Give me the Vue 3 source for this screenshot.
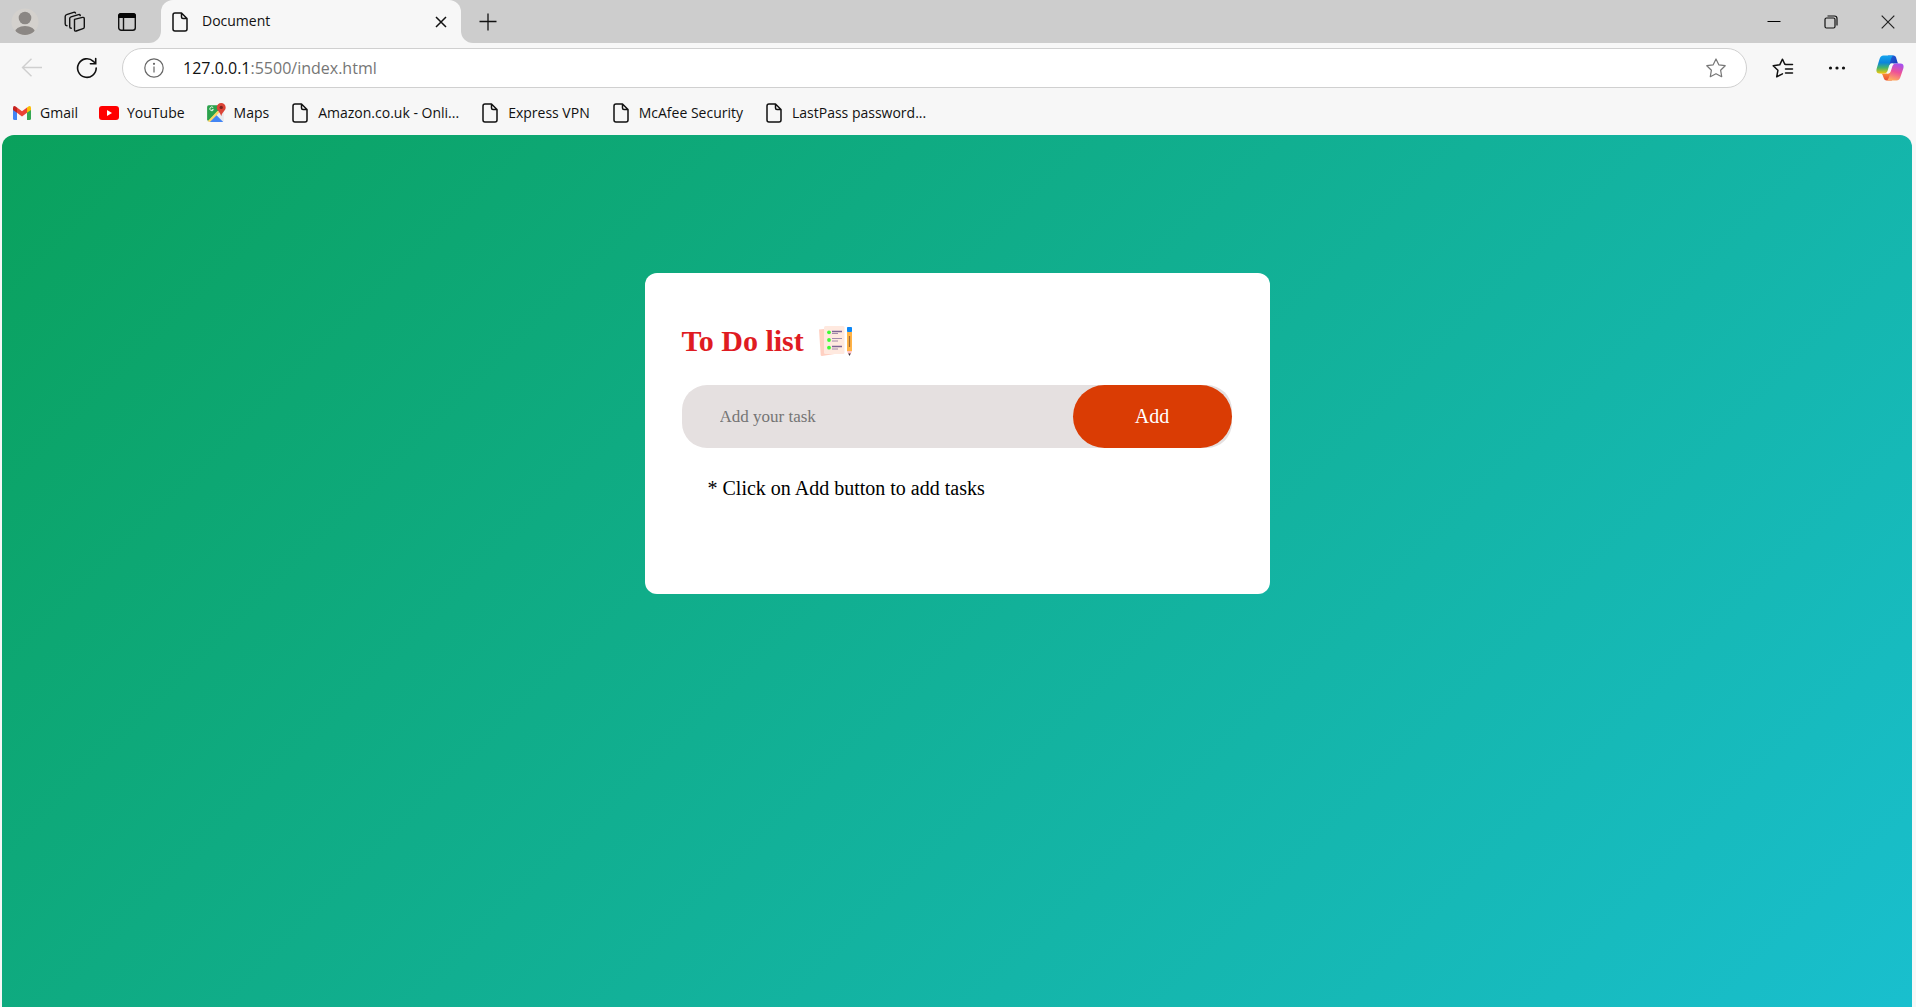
<script setup>
import { ref } from 'vue'

const task = ref('')
const address = ref('')
const bookmarks = [
  { label: 'Gmail', icon: 'gmail' },
  { label: 'YouTube', icon: 'youtube' },
  { label: 'Maps', icon: 'maps' },
  { label: 'Amazon.co.uk - Onli...', icon: 'page' },
  { label: 'Express VPN', icon: 'page' },
  { label: 'McAfee Security', icon: 'page' },
  { label: 'LastPass password...', icon: 'page' },
]
</script>

<template>
  <div class="browser">
    <header class="tab-strip">
      <div class="strip-left">
        <button class="icon-btn" aria-label="Profile">
          <svg width="28" height="28" viewBox="0 0 28 28">
            <defs><clipPath id="face"><circle cx="14" cy="14" r="13" /></clipPath></defs>
            <circle cx="14" cy="14" r="13.5" fill="#d4d1cd" />
            <g clip-path="url(#face)" fill="#8b8784">
              <circle cx="14" cy="10" r="6.3" />
              <ellipse cx="14" cy="25" rx="10.5" ry="7" />
            </g>
          </svg>
        </button>
        <button class="icon-btn" aria-label="Workspaces">
          <svg width="22" height="22" viewBox="0 0 22 22" fill="none" stroke="#111" stroke-width="1.4" stroke-linejoin="round" stroke-linecap="round">
            <path d="M10.500 8.400 18.500 6.400q1.800-.3 1.800 1.300v8.300q0 1.300-1.300 1.700l-6.800 2.300q-1.700.4-1.700-1.300v-8.600q0-1.400 0-1.700Z" />
            <path d="M7.300 17.300q-1.600 0-1.600-1.500V7.600q0-1.400 1.300-1.800l7.500-2.200q1.400-.3 1.800.9" />
            <path d="M3 14.800q-1.800-.1-1.800-1.700V5.500q0-1.500 1.400-1.900L9.600 1.300q1.400-.4 1.900.7" />
          </svg>
        </button>
        <button class="icon-btn" aria-label="Tab actions">
          <svg width="20" height="20" viewBox="0 0 20 20">
            <rect x="1.700" y="1.700" width="16.600" height="16.600" rx="2.500" fill="none" stroke="#111" stroke-width="1.400" />
            <path d="M1 6V4Q1 1 4 1h12q3 0 3 3v2Z" fill="#050505" />
            <path d="M6.500 6v12" stroke="#111" stroke-width="1.400" />
          </svg>
        </button>
      </div>
      <div class="tab-well">
        <div class="tab">
          <svg class="page-icon" width="16" height="20" viewBox="0 0 16 20"><path d="M3 1h6.500L15 6.500V17q0 2-2 2H3q-2 0-2-2V3q0-2 2-2ZM9.500 1v4q0 1.500 1.500 1.500h4" /></svg>
          <span class="tab-title">Document</span>
          <button class="icon-btn" aria-label="Close tab">
            <svg width="12" height="12" viewBox="0 0 12 12" stroke="#111" stroke-width="1.500"><path d="m1 1 10 10M11 1 1 11" /></svg>
          </button>
        </div>
      </div>
      <div class="strip-right">
        <button class="icon-btn" aria-label="New tab">
          <svg width="18" height="18" viewBox="0 0 18 18" stroke="#111" stroke-width="1.300"><path d="M9 .5v17M.5 8.500h17" /></svg>
        </button>
        <div class="window-buttons">
          <button class="icon-btn" aria-label="Minimise">
            <svg width="14" height="14" viewBox="0 0 14 14"><path d="M.5 6.500h13" stroke="#000" /></svg>
          </button>
          <button class="icon-btn" aria-label="Restore">
            <svg width="14" height="14" viewBox="0 0 14 14" fill="none" stroke="#111" stroke-width="1.200"><rect x="1" y="3" width="10" height="10" rx="1.500" /><path d="M3.500 1H10.500q2.500 0 2.500 2.500V10.500" /></svg>
          </button>
          <button class="icon-btn" aria-label="Close window">
            <svg width="14" height="14" viewBox="0 0 14 14" stroke="#222" stroke-width="1.200"><path d="m.7.7 12.600 12.600M13.300.7.7 13.300" /></svg>
          </button>
        </div>
      </div>
    </header>

    <div class="toolbar">
      <button class="icon-btn back" aria-label="Back" disabled>
        <svg width="22" height="20" viewBox="0 0 22 20" fill="none" stroke="#cfcfcf" stroke-width="1.400"><path d="M21 9.500H1.500M10.500.7 1.500 9.500l9 8.800" /></svg>
      </button>
      <button class="icon-btn" aria-label="Refresh">
        <svg width="22" height="22" viewBox="0 0 22 22" fill="none" stroke="#111" stroke-width="1.600" stroke-linecap="round"><path d="M20.200 11a9.300 9.300 0 1 1-2.900-6.700L19.500 6.500M19.700 1.500v5.300h-5.300" /></svg>
      </button>
      <div class="address">
        <svg width="20" height="20" viewBox="0 0 20 20" fill="none" stroke="#666" stroke-width="1.200"><circle cx="10" cy="10" r="9.200" /><path d="M10 8.500V14.500" /><circle cx="10" cy="5.800" r=".5" fill="#666" /></svg>
        <label class="url" for="address"><span class="host">127.0.0.1</span>:5500/index.html</label>
        <input id="address" v-model="address" class="address-input" type="text">
        <button class="icon-btn" aria-label="Add to favourites">
          <svg width="20" height="20" viewBox="0 0 20 20" fill="none" stroke="#777" stroke-width="1.200" stroke-linejoin="round"><path d="m10 1 2.800 5.800 6.400.9-4.600 4.500 1.100 6.500-5.700-3-5.700 3 1.100-6.500L.8 7.700l6.400-.9Z" /></svg>
        </button>
      </div>
      <div class="tools">
        <button class="icon-btn" aria-label="Favourites">
          <svg width="26" height="20" viewBox="0 0 26 20" fill="none" stroke="#111" stroke-width="1.500" stroke-linejoin="round" stroke-linecap="round"><path d="M13.500 6.300 12.800 6.200 10.500 1.200 7.700 6.800l-6.500 1 4.700 4.500-1.200 6.500 5.800-3M13.500 6.500h7M13.500 11h7M13.500 15h7" /></svg>
        </button>
        <button class="icon-btn" aria-label="Settings and more">
          <svg width="18" height="4" viewBox="0 0 18 4" fill="#111"><circle cx="2.500" cy="2" r="1.600" /><circle cx="9" cy="2" r="1.600" /><circle cx="15.500" cy="2" r="1.600" /></svg>
        </button>
        <button class="icon-btn" aria-label="Copilot">
          <svg width="28" height="26" viewBox="0 0 28 26">
            <defs>
              <linearGradient id="cp-left" x1="0" y1="0" x2="0" y2="1"><stop offset="0" stop-color="#16a5ee" /><stop offset=".4" stop-color="#0b85dc" /><stop offset=".68" stop-color="#46b46c" /><stop offset="1" stop-color="#f4c808" /></linearGradient>
              <linearGradient id="cp-right" x1="0.700" y1="0" x2="0.400" y2="1"><stop offset="0" stop-color="#a450f0" /><stop offset=".5" stop-color="#ee5297" /><stop offset="1" stop-color="#ffad5e" /></linearGradient>
              <linearGradient id="cp-top" x1="0" y1="0" x2="1" y2="1"><stop offset="0" stop-color="#2367dc" /><stop offset="1" stop-color="#1632b4" /></linearGradient>
              <linearGradient id="cp-bottom" x1="0" y1="0" x2="0" y2="1"><stop offset="0" stop-color="#ff9b38" /><stop offset="1" stop-color="#e94b35" /></linearGradient>
            </defs>
            <path d="M12 .5h5.500q2 0 2.600 2l1.300 4.500q.4 1.500 1.600 1.500h-7q-2 0-2.600 2Z" fill="url(#cp-top)" />
            <path d="M16 25.500h-5.500q-2 0-2.600-2L6.600 20q-.4-1.500-1.600-1.500h7q2 0 2.600-2Z" fill="url(#cp-bottom)" />
            <path d="M7.500.5H18q-2 0-2.900 3L11.700 15.500q-.9 3-3.700 3H3.500q-4 0-2.800-5L3.400 4.500Q4.400.5 7.500.5Z" fill="url(#cp-left)" />
            <path d="M20.500 25.500H10q2 0 2.900-3l3.400-11q.9-3 3.700-3h4.500q4 0 2.800 5l-2.700 8q-1 4-4.100 4Z" fill="url(#cp-right)" />
            <path d="M14.500 8.500h2.800q-1.200.7-1.700 2.500l-1.800 6q-.4 1.500-2 1.500H10.700q1.200-.7 1.600-2.500l1.200-5Z" fill="#f7f7f7" />
          </svg>
        </button>
      </div>
    </div>

    <nav class="bookmarks" aria-label="Bookmarks">
      <a v-for="item in bookmarks" :key="item.label" href="#" class="bookmark">
        <span class="bookmark-icon">
          <svg v-if="item.icon === 'gmail'" width="18" height="14" viewBox="0 0 18 14">
            <path d="M0 2v10.500Q0 14 1.500 14H4V5Z" fill="#4285f4" />
            <path d="M18 2v10.500q0 1.500-1.500 1.500H14V5Z" fill="#34a853" />
            <path d="M4 1.500v5.300L9 10.500l5-3.700V1.500L9 5.200Z" fill="#ea4335" />
            <path d="M0 2Q0-.5 2.200.2L4 1.500v5.300L0 4Z" fill="#c5221f" />
            <path d="M18 2q0-2.500-2.200-1.800L14 1.500v5.300L18 4Z" fill="#fbbc04" />
          </svg>
          <svg v-else-if="item.icon === 'youtube'" width="20" height="14" viewBox="0 0 20 14">
            <rect width="20" height="14" rx="3" fill="#f00" /><path d="m8 4 5 3-5 3Z" fill="#fff" />
          </svg>
          <svg v-else-if="item.icon === 'maps'" width="20" height="20" viewBox="0 0 18 18">
            <rect x="1" y="2" width="15" height="15" rx="1.500" fill="#e8eaed" />
            <path d="M1 15V3.500Q1 2 2.500 2H12v4L2 16.500Z" fill="#2ba24c" />
            <path d="M3 17 9 10.500 15.500 17Z" fill="#4285f4" />
            <path d="M1.500 16.500 10.500 7l1.500 1.500L3.500 17Z" fill="#fdd663" />
            <path d="M6.500 4.200A1.700 1.700 0 1 0 6.700 6H5.200" fill="none" stroke="#fff" stroke-width=".8" />
            <path d="M13.700 0a4 4 0 0 1 4 4c0 3-3.200 4-4 8-.8-4-4-5-4-8a4 4 0 0 1 4-4Z" fill="#dc4437" />
            <circle cx="13.700" cy="4" r="1.500" fill="#7b231e" />
          </svg>
          <svg v-else class="page-icon" width="16" height="20" viewBox="0 0 16 20"><path d="M3 1h6.500L15 6.500V17q0 2-2 2H3q-2 0-2-2V3q0-2 2-2ZM9.500 1v4q0 1.500 1.500 1.500h4" /></svg>
        </span>
        {{ item.label }}
      </a>
    </nav>

    <main class="page">
      <section class="card">
        <h1 class="title">
          To Do list
          <svg width="34" height="32" viewBox="0 0 34 32">
            <path d="m0 4.500 5-.6 17 20.500V28L3 31q-1.200 0-1.300-1Z" fill="#ffd0c2" />
            <rect x="5" y="1" width="20.500" height="28" rx="1.500" fill="#ffe9df" />
            <g fill="#3dfb35"><circle cx="10" cy="7.300" r="1.900" /><circle cx="10" cy="15" r="1.900" /><circle cx="10" cy="22.700" r="1.900" /></g>
            <g stroke="#7d6494"><path d="M13 6.500h10M13 21.500h10" stroke-width="1.300" /><path d="M13 13.500h10M13 8.500h6M13 16h6M13 24h6" opacity=".7" /></g>
            <rect x="28" y="2" width="5" height="5" rx=".7" fill="#0b86f5" />
            <path d="M28 7h5v19h-5Z" fill="#ffb347" />
            <path d="M30.500 11v11" stroke="#9a6a39" stroke-width="1.200" />
            <path d="M28 26h5l-1.200 3h-2.600Z" fill="#ffc2c4" />
            <path d="M29.200 28.500h2.600l-1.300 2.500Z" fill="#39303b" />
          </svg>
        </h1>
        <form class="row" @submit.prevent>
          <input v-model="task" class="task-input" type="text" placeholder="Add your task" aria-label="Add your task">
          <button class="add" type="submit">Add</button>
        </form>
        <p class="hint">* Click on Add button to add tasks</p>
      </section>
    </main>
  </div>
</template>

<style>
body {
  margin: 0;
}
</style>

<style scoped>
.browser {
  display: flex;
  flex-direction: column;
  min-height: 100vh;
  background: #f7f7f7;
  color: #111;
  font-family: "Open Sans", "Noto Sans", sans-serif;
  font-size: 14px;
}
svg {
  display: block;
  flex: none;
}
.icon-btn {
  display: flex;
  flex: none;
  padding: 0;
  border: 0;
  background: none;
}
.page-icon {
  fill: none;
  stroke: #111;
  stroke-width: 1.5;
  stroke-linejoin: round;
}
.tab-strip {
  display: flex;
  height: 43px;
}
.strip-left {
  display: flex;
  align-items: center;
  box-sizing: border-box;
  width: 161px;
  padding-left: 11px;
  gap: 25px;
  background: #cdcdcd;
  border-bottom-right-radius: 12px;
}
.strip-left .icon-btn:last-child {
  margin-left: 6px;
}
.tab-well {
  width: 300px;
  background: #cdcdcd;
}
.tab {
  display: flex;
  align-items: center;
  box-sizing: border-box;
  height: 43px;
  padding: 0 14px 0 11px;
  gap: 14px;
  background: #f7f7f7;
  border-radius: 12px 12px 0 0;
}
.tab-title {
  flex: 1;
  padding-bottom: 2px;
  line-height: 20px;
}
.strip-right {
  display: flex;
  flex: 1;
  align-items: center;
  justify-content: space-between;
  padding: 0 21px 0 18px;
  background: #cdcdcd;
  border-bottom-left-radius: 12px;
}
.window-buttons {
  display: flex;
  gap: 43px;
}
.toolbar {
  display: flex;
  align-items: center;
  padding: 5px 12px 5px 21px;
}
.back {
  margin-right: 33px;
}
.address {
  display: flex;
  flex: 1;
  align-items: center;
  box-sizing: border-box;
  height: 40px;
  margin: 0 25px 0 24px;
  padding: 0 20px 0 21px;
  border: 1px solid #d0d0d0;
  border-radius: 20px;
  background: #fff;
}
.url {
  margin-left: 19px;
  color: #767676;
  font-size: 16px;
}
.host {
  color: #111;
}
.address-input {
  flex: 1;
  border: 0;
  outline: 0;
  background: none;
}
.tools {
  display: flex;
  align-items: center;
  gap: 30px;
}
.bookmarks {
  display: flex;
  align-items: center;
  height: 40px;
  padding: 0 12px 2px;
  gap: 21px;
}
.bookmark {
  display: flex;
  align-items: center;
  gap: 8px;
  color: #111;
  line-height: 20px;
  text-decoration: none;
  white-space: nowrap;
}
.bookmark-icon {
  display: flex;
  justify-content: center;
  width: 20px;
}
.page {
  flex: 1;
  margin: 0 4px 0 2px;
  padding: 138px 20px 0;
  background: linear-gradient(135deg, #0aa15c, #19bfce);
  border-radius: 12px 12px 0 0;
  font-family: "Liberation Serif", serif;
}
.card {
  box-sizing: border-box;
  max-width: 625px;
  margin: 0 auto;
  padding: 50px 38px 94px 37px;
  border-radius: 12px;
  background: #fff;
}
.title {
  display: flex;
  align-items: center;
  gap: 15px;
  margin: 0 0 26px;
  color: #df1b22;
  font-size: 30px;
  line-height: 36px;
}
.row {
  display: flex;
  height: 63px;
  border-radius: 25px;
  background: #e5e0e0;
}
.task-input {
  flex: 1;
  min-width: 0;
  padding: 0 0 0 38px;
  border: 0;
  outline: 0;
  background: none;
  font-family: inherit;
  font-size: 17px;
}
.task-input::placeholder {
  color: #757575;
}
.add {
  width: 159px;
  border: 0;
  border-radius: 32px;
  background: #da3c04;
  color: #fff;
  font-family: inherit;
  font-size: 20px;
}
.hint {
  margin: 28px 0 0 26px;
  color: #000;
  font-size: 20px;
  line-height: 24px;
}
</style>
